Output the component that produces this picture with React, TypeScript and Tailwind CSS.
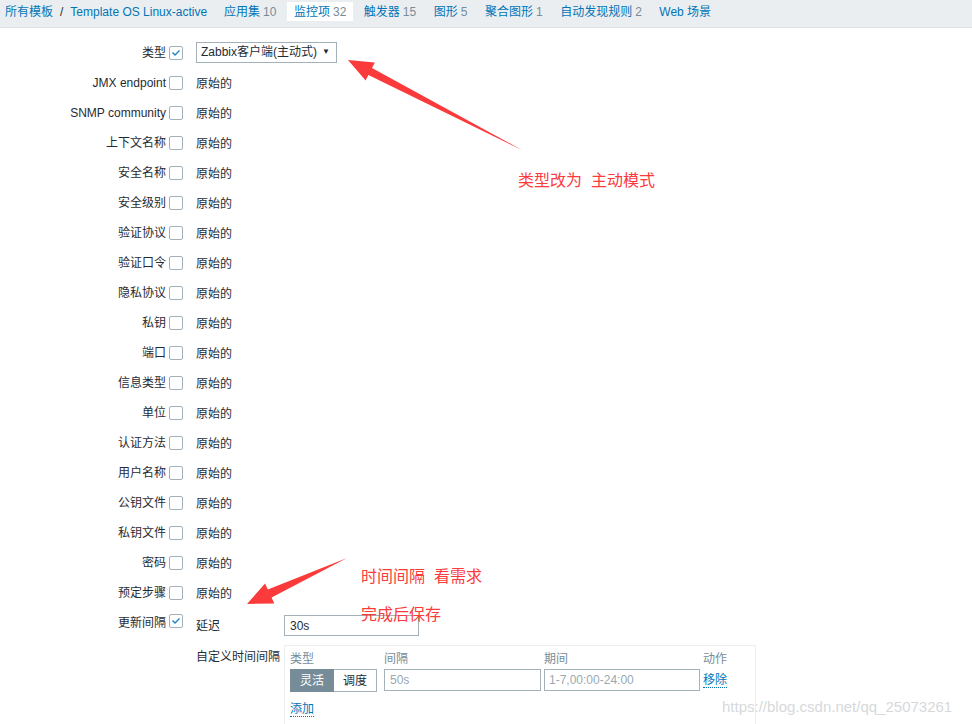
import React from "react";

const rows = [
  "JMX endpoint",
  "SNMP community",
  "上下文名称",
  "安全名称",
  "安全级别",
  "验证协议",
  "验证口令",
  "隐私协议",
  "私钥",
  "端口",
  "信息类型",
  "单位",
  "认证方法",
  "用户名称",
  "公钥文件",
  "私钥文件",
  "密码",
  "预定步骤",
];

const tabs = [
  { name: "应用集", count: "10" },
  { name: "监控项", count: "32", active: true },
  { name: "触发器", count: "15" },
  { name: "图形", count: "5" },
  { name: "聚合图形", count: "1" },
  { name: "自动发现规则", count: "2" },
  { name: "Web 场景", count: "" },
];

function Check({ checked }: { checked?: boolean }) {
  return (
    <span className="w-[14px] h-[14px] shrink-0 border border-[#a3b2ba] rounded-[2px] bg-white flex items-center justify-center">
      {checked && (
        <svg width="10" height="8" viewBox="0 0 10 8">
          <path d="M1.5 3.5 L4 6 L8.5 1.5" fill="none" stroke="#1b84c4" strokeWidth="1.4" />
        </svg>
      )}
    </span>
  );
}

export default function App() {
  return (
    <div
      className="relative w-[972px] h-[724px] overflow-hidden bg-white text-[12px] text-[#1f2c33]"
      style={{ fontFamily: '"Liberation Sans", "Noto Sans CJK SC", sans-serif' }}
    >
      {/* breadcrumb / tabs */}
      <div className="h-[28px] bg-[#ebeef0] border-b border-[#dde2e5] flex items-start pl-[5px] pt-[2px]">
        <div className="flex items-center h-[19px] text-[#0275b8]">
          <span>所有模板</span>
          <span className="mx-[7px] text-[#1f2c33]">/</span>
          <span>Template OS Linux-active</span>
        </div>
        <div className="flex items-center ml-[10px]">
          {tabs.map((t) => (
            <div
              key={t.name}
              className={
                "h-[19px] flex items-center px-[7px] mr-[3.5px] " +
                (t.active ? "bg-white" : "")
              }
            >
              <span className="text-[#0275b8]">{t.name}</span>
              {t.count && <span className="ml-[3px] text-[#768d99]">{t.count}</span>}
            </div>
          ))}
        </div>
      </div>

      {/* form */}
      <div className="pt-[10px] flex flex-col">
        <div className="h-[30px] flex items-center">
          <div className="w-[166px] text-right">类型</div>
          <div className="ml-[3px]"><Check checked /></div>
          <div className="ml-[13px] h-[21px] w-[141px] border border-[#a3b2ba] flex items-center justify-between px-[4px] -mt-[2px]">
            <span>Zabbix客户端(主动式)</span>
            <span className="text-[8px] mr-[2px]">▼</span>
          </div>
        </div>
        {rows.map((r) => (
          <div key={r} className="h-[30px] flex items-center">
            <div className="w-[166px] text-right">{r}</div>
            <div className="ml-[3px]"><Check /></div>
            <div className="ml-[13px] mt-[2px]">原始的</div>
          </div>
        ))}
        <div className="flex items-start">
          <div className="w-[166px] text-right pt-[6px]">更新间隔</div>
          <div className="ml-[3px] pt-[6px]"><Check checked /></div>
          <div className="ml-[13px] flex flex-col">
            <div className="flex items-center mt-[7px] h-[21px]">
              <div className="w-[88px] pt-[1px]">延迟</div>
              <div className="w-[135px] h-[21px] border border-[#a3b2ba] flex items-center px-[5px] text-[#1f2c33]">30s</div>
            </div>
            <div className="flex items-start mt-[9px]">
              <div className="w-[88px] pt-[3px]">自定义时间间隔</div>
              <div className="w-[472px] h-[120px] border border-[#ebeef0] px-[5px] pt-[4px]">
                <div className="grid grid-cols-[87px_161px_160px_auto]">
                  <div className="text-[#768d99] h-[17px]">类型</div>
                  <div className="text-[#768d99] pl-[7px]">间隔</div>
                  <div className="text-[#768d99] pl-[6px]">期间</div>
                  <div className="text-[#768d99] pl-[5px]">动作</div>
                  <div className="flex h-[23px] mt-[1px]">
                    <span className="w-[44px] bg-[#768d99] text-white flex items-center justify-center border border-[#768d99]">灵活</span>
                    <span className="w-[43px] bg-white flex items-center justify-center border border-[#a3b2ba] border-l-0">调度</span>
                  </div>
                  <div className="pl-[7px] mt-[1px]">
                    <div className="h-[22px] w-[157px] border border-[#a3b2ba] flex items-center px-[5px] text-[#9aa9b1]">50s</div>
                  </div>
                  <div className="pl-[6px] mt-[1px]">
                    <div className="h-[22px] w-[156px] border border-[#a3b2ba] flex items-center px-[4px] text-[#9aa9b1]">1-7,00:00-24:00</div>
                  </div>
                  <div className="pl-[5px] mt-[1px] flex items-center">
                    <span className="text-[#0275b8] border-b border-dotted border-[#0275b8] leading-[13px]">移除</span>
                  </div>
                </div>
                <div className="mt-[8px]">
                  <span className="text-[#0275b8] border-b border-dotted border-[#0275b8] leading-[13px]">添加</span>
                </div>
              </div>
            </div>
          </div>
        </div>
      </div>

      {/* annotations */}
      <svg className="absolute left-0 top-0 pointer-events-none" width="972" height="724">
        <polygon
          points="348,60 374.8,62.6 372,68 522,150 368.4,75.1 365.6,80.4"
          fill="#fb3b3b"
        />
        <polygon
          points="247,604 265.1,583.5 267.8,589.4 347,558 271.6,597.6 274.3,603.5"
          fill="#fb3b3b"
        />
      </svg>
      <div className="absolute left-[518px] top-[169px] text-[16px] text-[#fb3b3b] whitespace-pre">类型改为  主动模式</div>
      <div className="absolute left-[361px] top-[565px] text-[16px] text-[#fb3b3b] whitespace-pre">时间间隔  看需求</div>
      <div className="absolute left-[361px] top-[603px] text-[16px] text-[#fb3b3b]">完成后保存</div>
      <div className="absolute left-[722px] top-[696px] text-[15px] text-[#d6d9db]">https://blog.csdn.net/qq_25073261</div>
    </div>
  );
}
